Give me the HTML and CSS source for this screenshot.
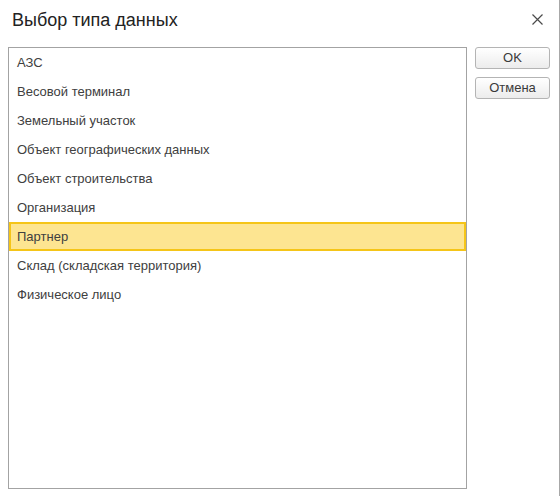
FILE: index.html
```html
<!DOCTYPE html>
<html lang="ru">
<head>
<meta charset="utf-8">
<title>Выбор типа данных</title>
<link rel="stylesheet" href="styles.css">
</head>
<body>
<div class="window">
  <div class="header">
    <div class="title">Выбор типа данных</div>
    <div class="close" aria-label="Закрыть">
      <svg width="11" height="11" viewBox="0 0 11 11"><path d="M0.5 0.5 L10.5 10.5 M10.5 0.5 L0.5 10.5" stroke="#4a4a4a" stroke-width="1.2" fill="none"/></svg>
    </div>
  </div>
  <div class="body">
    <div class="list">
      <div class="row">АЗС</div>
      <div class="row">Весовой терминал</div>
      <div class="row">Земельный участок</div>
      <div class="row">Объект географических данных</div>
      <div class="row">Объект строительства</div>
      <div class="row">Организация</div>
      <div class="row selected">Партнер</div>
      <div class="row">Склад (складская территория)</div>
      <div class="row">Физическое лицо</div>
    </div>
    <div class="buttons">
      <div class="btn">OK</div>
      <div class="btn">Отмена</div>
    </div>
  </div>
</div>
</body>
</html>
```
FILE: styles.css
```css
html, body {
  margin: 0;
  padding: 0;
  background: #ffffff;
}
body {
  font-family: "Liberation Sans", Arial, sans-serif;
  color: #333333;
}
.window {
  width: 559px;
  height: 496px;
  border-right: 1px solid #a8a8a8;
  box-sizing: content-box;
}
.header {
  height: 47px;
  display: flex;
  justify-content: space-between;
  align-items: flex-start;
}
.title {
  font-size: 18px;
  line-height: 20px;
  padding: 10px 0 0 12px;
  color: #222222;
}
.close {
  width: 11px;
  height: 11px;
  margin: 14px 16px 0 0;
}
.close svg {
  display: block;
}
.body {
  display: flex;
  gap: 8px;
  padding-left: 8px;
}
.list {
  width: 459px;
  height: 442px;
  box-sizing: border-box;
  border: 1px solid #a3a3a3;
  font-size: 13px;
  color: #404040;
}
.row {
  height: 29px;
  line-height: 29px;
  padding-left: 8px;
  box-sizing: border-box;
}
.row.selected {
  background: #fde591;
  border: 2px solid #f5c518;
  line-height: 25px;
  padding-left: 6px;
}
.buttons {
  display: flex;
  flex-direction: column;
  gap: 8px;
}
.btn {
  width: 75px;
  height: 22px;
  box-sizing: border-box;
  border: 1px solid #b4b4b4;
  border-radius: 3px;
  background: linear-gradient(#ffffff, #ececec);
  font-size: 13px;
  line-height: 20px;
  text-align: center;
  color: #3a3a3a;
}
```
